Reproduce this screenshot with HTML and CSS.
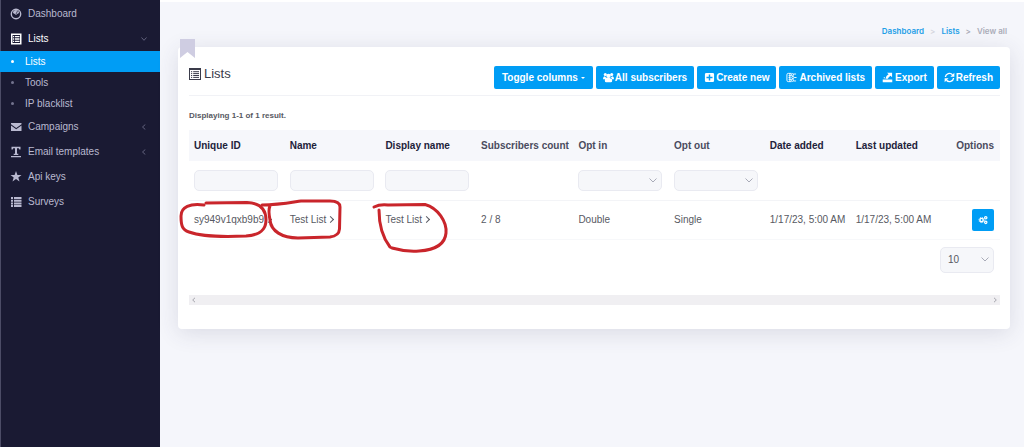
FILE: index.html
```
<!DOCTYPE html>
<html lang="en">
<head>
<meta charset="utf-8">
<title>View all lists</title>
<link rel="stylesheet" href="styles.css">
</head>
<body>
<div class="app">
  <nav class="sidebar" aria-label="Main">
    <ul class="menu">
      <li><a class="menu-link" href="#"><svg class="icon" viewBox="0 0 12 12"><circle cx="6" cy="6" r="4.7" fill="none" stroke="currentColor" stroke-width="1.4"/><path d="M3 5a3 3 0 0 1 6 0L6.8 6.2a1 1 0 0 1-1.6 0z" fill="currentColor"/><path d="M6 6 7.5 3" stroke="#1a1a33" stroke-width=".7"/></svg>Dashboard</a></li>
      <li class="open"><a class="menu-link" href="#"><svg class="icon" viewBox="0 0 12 12"><path fill-rule="evenodd" d="M1 .5h10.500v11H1zM2.500 2v8H10V2z" fill="currentColor"/><path d="M3 3.700h1.200M5 3.700h4.500M3 6h1.200M5 6h4.500M3 8.300h1.200M5 8.300h4.500" stroke="currentColor" stroke-width="1.300"/></svg>Lists<svg class="arrow" viewBox="0 0 6 6"><path d="M.5 1.5 3 4.3 5.5 1.5"/></svg></a>
        <ul class="submenu">
          <li><a class="sub-link active" href="#">Lists</a></li>
          <li><a class="sub-link" href="#">Tools</a></li>
          <li><a class="sub-link" href="#">IP blacklist</a></li>
        </ul>
      </li>
      <li><a class="menu-link" href="#"><svg class="icon" viewBox="0 0 12 12"><path d="M1 2h10.500v1.200L6.200 7 1 3.200zM1 4.600 6.200 8.300l5.300-3.700V10H1z" fill="currentColor"/></svg>Campaigns<svg class="arrow" viewBox="0 0 6 6"><path d="M4.300.5 1.500 3l2.800 2.500"/></svg></a></li>
      <li><a class="menu-link" href="#"><svg class="icon" viewBox="0 0 12 12"><path d="M1.500.8h9v2.700H9.300L8.800 2.300H7v5.500h1.300V9H3.700V7.800H5V2.300H3.200L2.700 3.500H1.500zM1 10h10v1.300H1z" fill="currentColor"/></svg>Email templates<svg class="arrow" viewBox="0 0 6 6"><path d="M4.300.5 1.500 3l2.800 2.500"/></svg></a></li>
      <li><a class="menu-link" href="#"><svg class="icon" viewBox="0 0 12 12"><path d="M6 0 7.400 4H11.500L8.300 6.500 9.500 10.500 6 8.100 2.500 10.500 3.700 6.500.5 4H4.600z" fill="currentColor"/></svg>Api keys</a></li>
      <li><a class="menu-link" href="#"><svg class="icon" viewBox="0 0 12 12"><path d="M1 1h2v2H1zM4 1h7.500v2H4zM1 3.700h2v2H1zM4 3.700h7.500v2H4zM1 6.400h2v2H1zM4 6.400h7.500v2H4zM1 9.100h2v2H1zM4 9.100h7.500v2H4z" fill="currentColor"/></svg>Surveys</a></li>
    </ul>
  </nav>
  <main class="content">
    <nav class="breadcrumb" aria-label="Breadcrumb">
      <a href="#">Dashboard</a><span class="sep">&gt;</span><a href="#">Lists</a><span class="sep dark">&gt;</span><span class="current">View all</span>
    </nav>
    <section class="card">
      <svg class="bookmark" viewBox="0 0 15 19"><path d="M0 0h15v19l-7.500-6L0 19z" fill="#cfcde2"/></svg>
      <header class="card-head">
        <h1 class="title"><svg class="icon" viewBox="0 0 12 12"><path fill-rule="evenodd" d="M0 0h12v12H0zM1 2v9h10V2z" fill="currentColor"/><path d="M2 3.700h1.200M4.200 3.700H10M2 5.600h1.200M4.200 5.600H10M2 7.500h1.200M4.200 7.500H10M2 9.400h1.200M4.200 9.400H10" stroke="currentColor"/></svg>Lists</h1>
        <div class="actions">
          <button class="btn toggle" type="button">Toggle columns<span class="caret"></span></button>
          <button class="btn" type="button"><svg class="icon" viewBox="0 0 12 12"><g fill="currentColor"><circle cx="2.500" cy="2.700" r="1.700"/><circle cx="9.500" cy="2.700" r="1.700"/><circle cx="6" cy="4.200" r="2.400"/><path d="M0 7.500Q0 4.500 2 4.500L4.200 7 2 8H.8Q0 8 0 7.500zM12 7.500Q12 4.500 10 4.500L7.800 7 10 8h1.200q.8 0 .8-.5zM2 9.500Q2 6.300 4 6.300h4q2 0 2 3.200Q10 11.300 8.500 11.300h-5Q2 11.300 2 9.500z"/></g></svg>All subscribers</button>
          <button class="btn" type="button"><svg class="icon" viewBox="0 0 12 12"><path fill-rule="evenodd" d="M2.500 1h7Q11 1 11 2.500v7Q11 11 9.500 11h-7Q1 11 1 9.500v-7Q1 1 2.500 1zM5.200 2.700v2.500H2.700v1.600h2.500v2.500h1.600V6.800h2.500V5.200H6.800V2.700z" fill="currentColor"/></svg>Create new</button>
          <button class="btn archived" type="button"><svg class="icon" viewBox="0 0 12 12"><g fill="none" stroke="currentColor" stroke-width="1"><path d="M6 1.500H2.500Q1 1.500 1 3v6q0 1.500 1.500 1.500H6M2.800 4h3M2.800 6h2M2.800 8h3M4.200 1.500v9M8 2.200h3M9 6h2.500M8 9.800h3"/><circle cx="7" cy="3" r="1.200"/><circle cx="7.500" cy="6" r="1.200"/><circle cx="7" cy="9" r="1.200"/></g></svg>Archived lists</button>
          <button class="btn archived" type="button"><svg class="icon" viewBox="0 0 12 12"><path d="M5.500.8H11v5L9.300 4.200Q6.800 5.700 6.500 7.300H3.800Q4.300 4 7.200 2.400zM.8 8.300h10.400v3H.8z" fill="currentColor"/><path d="M2.500 7V5.500" stroke="currentColor"/></svg>Export</button>
          <button class="btn" type="button"><svg class="icon" viewBox="0 0 12 12"><path d="M1.500 5.500A4.500 4.500 0 0 1 9.300 3M10.500 6.500A4.500 4.500 0 0 1 2.700 9" fill="none" stroke="currentColor" stroke-width="1.500"/><path d="M11.300.8v4.400H7zM.7 11.200V6.800H5z" fill="currentColor"/></svg>Refresh</button>
        </div>
      </header>
      <p class="summary">Displaying 1-1 of 1 result.</p>
      <table class="grid">
        <colgroup><col class="c-text"><col class="c-text"><col class="c-text"><col class="c-count"><col class="c-text"><col class="c-text"><col class="c-date"><col></colgroup>
        <thead>
          <tr class="heads"><th>Unique ID</th><th>Name</th><th>Display name</th><th class="plain">Subscribers count</th><th class="plain">Opt in</th><th class="plain">Opt out</th><th>Date added</th><th><span class="pair">Last updated <span class="plain">Options</span></span></th></tr>
          <tr class="filters">
            <td><input class="field" type="text" aria-label="Unique ID"></td>
            <td><input class="field" type="text" aria-label="Name"></td>
            <td><input class="field" type="text" aria-label="Display name"></td>
            <td></td>
            <td><span class="pick"><select class="field" aria-label="Opt in"><option></option><option>Double</option><option>Single</option></select><svg class="chev" viewBox="0 0 8 5"><path d="M.5.500 4 4 7.500.500"/></svg></span></td>
            <td><span class="pick"><select class="field" aria-label="Opt out"><option></option><option>Double</option><option>Single</option></select><svg class="chev" viewBox="0 0 8 5"><path d="M.5.500 4 4 7.500.500"/></svg></span></td>
            <td></td><td></td>
          </tr>
        </thead>
        <tbody>
          <tr class="record"><td><a class="more" href="#">sy949v1qxb9b9</a></td><td><a class="more" href="#">Test List</a></td><td><a class="more" href="#">Test List</a></td><td>2 / 8</td><td>Double</td><td>Single</td><td>1/17/23, 5:00 AM</td>
            <td><span class="pair">1/17/23, 5:00 AM <button class="gear" type="button" aria-label="Options"><svg viewBox="0 0 12 12"><g fill="none" stroke="currentColor"><circle cx="4.300" cy="6" r="2" stroke-width="1.700"/><circle cx="4.300" cy="6" r="3.200" stroke-width="1" stroke-dasharray="1.300 1.210"/><circle cx="9.300" cy="3.200" r="1.400" stroke-width="1.500"/><circle cx="9.300" cy="8.800" r="1.400" stroke-width="1.500"/></g></svg></button></span></td></tr>
        </tbody>
      </table>
      <div class="pager"><span class="pick"><select class="field" aria-label="Page size"><option>10</option><option>20</option><option>50</option></select><svg class="chev" viewBox="0 0 8 5"><path d="M.5.500 4 4 7.500.500"/></svg></span></div>
      <div class="scroller"><svg viewBox="0 0 6 6"><path d="M4 .8 1.700 3 4 5.200"/></svg><svg viewBox="0 0 6 6"><path d="M2 .8 4.300 3 2 5.200"/></svg></div>
      <svg class="marks" width="290" height="60" viewBox="170 195 290 60">
        <path d="M204 205C190 203 181 207 181 216C181 225 182 230 189 232C203 237 225 237 246 236C260 235 266 230 266 220C266 209 260 203 247 202.500L206 203"/>
        <path d="M262 205C278 205 288 203 301 201L330 201Q340 201 340 207L339.500 229Q339 236 330 237L298 238C282 238 271 231 270 220Q268 210 270 206"/>
        <path d="M374 207Q380 204 388 205L425 204.500C438 208 447 222 446 233C445 245 434 250 419 251C407 252 399 250 392 248L390 247C383 238 379 226 379 210"/>
      </svg>
    </section>
  </main>
</div>
</body>
</html>
```
FILE: styles.css
```
* { box-sizing: border-box; }
body { margin: 0; font: 10px/14px "Liberation Sans", Arial, sans-serif; color: #575962; background: #f5f6fb; }
a { color: inherit; text-decoration: none; }
ul { list-style: none; margin: 0; padding: 0; }
button, select, input { font: inherit; color: inherit; }
.app { display: flex; min-height: 100vh; }

.sidebar { width: 160px; flex: none; padding-top: 1px; background: #1a1a33; color: #b9b9d0; box-shadow: inset 1px 0 #4c4c66; }
.menu-link { display: flex; align-items: center; gap: 6px; height: 25px; padding: 0 13px 0 10px; }
.icon { width: 12px; height: 12px; flex: none; }
.open > .menu-link { color: #fff; }
.arrow { width: 6px; height: 6px; margin-left: auto; fill: none; stroke: #74748f; stroke-width: .8; }
.sub-link { display: flex; align-items: center; gap: 11px; height: 21px; padding-left: 11px; }
.sub-link::before { content: ""; width: 3px; height: 3px; border-radius: 50%; background: #74748f; }
.active { background: #009df5; color: #fff; }
.active::before { background: #fff; }

.content { flex: 1; min-width: 0; padding: 23px 14px 24px 18px; border-top: 2px solid #fff; }
.breadcrumb { display: flex; justify-content: flex-end; gap: 6px; margin: 0 3px 10px 0; font: 600 8px/12px Inter, sans-serif; color: #aaacb8; }
.breadcrumb a { color: #1d9fe8; }
.sep { color: #d5d7e0; }
.dark { color: #aaacb8; }

.card { position: relative; padding: 14px 10px 24px 11px; background: #fff; border-radius: 4px; box-shadow: 0 4px 22px rgba(60, 60, 90, .14); }
.bookmark { position: absolute; left: 2px; top: -8px; width: 15px; height: 19px; }
.card-head { display: flex; justify-content: space-between; align-items: flex-start; padding: 5px 0 6px; border-bottom: 1px solid #f1f2f6; }
.title { display: flex; align-items: center; gap: 3px; margin: 0; font-size: 13px; font-weight: 400; line-height: 16px; color: #3a3b4a; }
.actions { display: flex; gap: 3px; }
.btn { display: flex; align-items: center; gap: 1px; height: 23px; padding: 0 7px; border: 0; border-radius: 2px; background: #009df5; color: #fff; font-weight: 700; white-space: nowrap; }
.btn .icon { width: 11px; height: 11px; }
.toggle { gap: 3px; padding: 0 8px; }
.archived .icon { margin-right: 1px; }
.caret { border: 2px solid transparent; border-top-color: #fff; border-bottom: 0; }
.summary { margin: 13px 0 7px; font-size: 8px; font-weight: 700; }

.grid { width: 100%; table-layout: fixed; border-collapse: collapse; }
.c-text { width: 11.8%; }
.c-count { width: 12%; }
.c-date { width: 10.6%; }
.grid th, .grid td { padding: 0 6px 0 5px; text-align: left; white-space: nowrap; }
.heads { height: 31px; background: #f6f7fb; }
.heads th { color: #22223a; }
.heads .plain { color: #4a4b5e; }
.filters { height: 39px; border-bottom: 1px solid #f3f4f7; }
.record { height: 39px; border-bottom: 1px solid #f7f8fa; }
.more::after { content: ""; display: inline-block; width: 4px; height: 4px; margin-left: 2px; border: solid currentColor; border-width: 1px 1px 0 0; transform: rotate(45deg); vertical-align: 1px; }
.pair { display: flex; justify-content: space-between; align-items: center; }
.field { display: block; width: 100%; height: 21px; padding: 0 7px; border: 1px solid #e9eaf1; border-radius: 5px; background: #f6f7fa; appearance: none; }
.grid .field { max-width: 84px; }
.pick { display: grid; align-items: center; max-width: 84px; }
.pick > * { grid-area: 1 / 1; }
.chev { width: 8px; height: 5px; margin-right: 5px; justify-self: end; fill: none; stroke: #a9abb8; stroke-width: 1; pointer-events: none; }
.gear { display: grid; place-items: center; width: 22px; height: 22px; padding: 0; border: 0; border-radius: 2px; background: #009df5; color: #fff; }
.gear svg { width: 10px; height: 10px; }
.pager { display: flex; justify-content: flex-end; padding: 7px 6px 22px 0; }
.pager .pick { width: 54px; }
.pager .field { height: 26px; }
.scroller { display: flex; justify-content: space-between; align-items: center; height: 10px; padding: 0 2px; background: #f0eff2; }
.scroller svg { width: 6px; height: 6px; fill: none; stroke: #a5a5ad; }
.marks { position: absolute; left: -8px; top: 148px; fill: none; stroke: #c9252b; stroke-width: 3; stroke-linecap: round; stroke-linejoin: round; pointer-events: none; }
```
